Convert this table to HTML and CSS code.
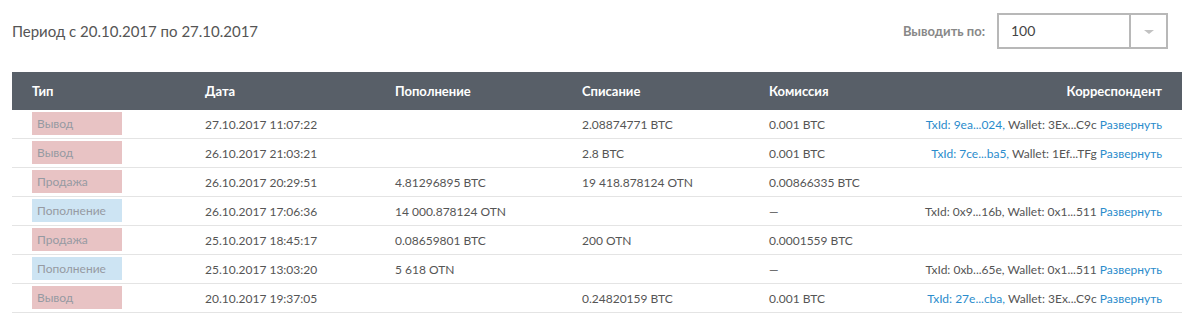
FILE: index.html
```html
<!DOCTYPE html>
<html lang="ru">
<head>
<meta charset="utf-8">
<link rel="stylesheet" href="styles.css">
</head>
<body>
<div class="page">
  <div class="top">
    <div class="period">Период с 20.10.2017 по 27.10.2017</div>
    <div class="per-page">
      <span class="per-label">Выводить по:</span>
      <div class="select">
        <span class="select-value">100</span>
        <span class="select-btn"><span class="arrow"></span></span>
      </div>
    </div>
  </div>
  <div class="table">
    <div class="row head">
      <div class="c c1">Тип</div>
      <div class="c c2">Дата</div>
      <div class="c c3">Пополнение</div>
      <div class="c c4">Списание</div>
      <div class="c c5">Комиссия</div>
      <div class="c c6">Корреспондент</div>
    </div>
    <div class="row">
      <div class="c c1"><span class="badge red">Вывод</span></div>
      <div class="c c2">27.10.2017 11:07:22</div>
      <div class="c c3"></div>
      <div class="c c4">2.08874771 BTC</div>
      <div class="c c5">0.001 BTC</div>
      <div class="c c6"><span class="link">TxId: 9ea...024,</span> Wallet: 3Ex...C9c <span class="link">Развернуть</span></div>
    </div>
    <div class="row">
      <div class="c c1"><span class="badge red">Вывод</span></div>
      <div class="c c2">26.10.2017 21:03:21</div>
      <div class="c c3"></div>
      <div class="c c4">2.8 BTC</div>
      <div class="c c5">0.001 BTC</div>
      <div class="c c6"><span class="link">TxId: 7ce...ba5,</span> Wallet: 1Ef...TFg <span class="link">Развернуть</span></div>
    </div>
    <div class="row">
      <div class="c c1"><span class="badge red">Продажа</span></div>
      <div class="c c2">26.10.2017 20:29:51</div>
      <div class="c c3">4.81296895 BTC</div>
      <div class="c c4">19 418.878124 OTN</div>
      <div class="c c5">0.00866335 BTC</div>
      <div class="c c6"></div>
    </div>
    <div class="row">
      <div class="c c1"><span class="badge blue">Пополнение</span></div>
      <div class="c c2">26.10.2017 17:06:36</div>
      <div class="c c3">14 000.878124 OTN</div>
      <div class="c c4"></div>
      <div class="c c5">—</div>
      <div class="c c6">TxId: 0x9...16b, Wallet: 0x1...511 <span class="link">Развернуть</span></div>
    </div>
    <div class="row">
      <div class="c c1"><span class="badge red">Продажа</span></div>
      <div class="c c2">25.10.2017 18:45:17</div>
      <div class="c c3">0.08659801 BTC</div>
      <div class="c c4">200 OTN</div>
      <div class="c c5">0.0001559 BTC</div>
      <div class="c c6"></div>
    </div>
    <div class="row">
      <div class="c c1"><span class="badge blue">Пополнение</span></div>
      <div class="c c2">25.10.2017 13:03:20</div>
      <div class="c c3">5 618 OTN</div>
      <div class="c c4"></div>
      <div class="c c5">—</div>
      <div class="c c6">TxId: 0xb...65e, Wallet: 0x1...511 <span class="link">Развернуть</span></div>
    </div>
    <div class="row">
      <div class="c c1"><span class="badge red">Вывод</span></div>
      <div class="c c2">20.10.2017 19:37:05</div>
      <div class="c c3"></div>
      <div class="c c4">0.24820159 BTC</div>
      <div class="c c5">0.001 BTC</div>
      <div class="c c6"><span class="link">TxId: 27e...cba,</span> Wallet: 3Ex...C9c <span class="link">Развернуть</span></div>
    </div>
  </div>
</div>
</body>
</html>
```

FILE: styles.css
```css
* { box-sizing: border-box; }
html, body { margin: 0; padding: 0; background: #fff; }
body {
  font-family: Lato, "Open Sans", sans-serif;
  color: #555;
  font-size: 12px;
}
.page {
  padding: 13px 14px 0 12px;
  width: 1196px;
}
.top {
  display: flex;
  justify-content: space-between;
  align-items: center;
  height: 36px;
  margin-bottom: 23px;
}
.period {
  font-size: 15px;
  color: #555;
}
.per-page {
  display: flex;
  align-items: center;
  gap: 12px;
  margin-right: 14px;
}
.per-label {
  font-weight: bold;
  color: #888;
  font-size: 13px;
}
.select {
  display: flex;
  width: 171px;
  height: 36px;
  border: 2px solid #b8b8b8;
}
.select-value {
  flex: 1;
  padding-left: 12px;
  line-height: 32px;
  font-size: 14px;
  color: #444;
}
.select-btn {
  width: 37px;
  border-left: 2px solid #b8b8b8;
  display: flex;
  align-items: center;
  justify-content: center;
}
.arrow {
  width: 0;
  height: 0;
  border-left: 5px solid transparent;
  border-right: 5px solid transparent;
  border-top: 4px solid #c2c2c2;
  margin-top: 2px;
}
.table { width: 1170px; }
.row {
  display: grid;
  grid-template-columns: 173px 190px 187px 187px 150px 1fr;
  height: 29px;
  border-bottom: 1px solid #e4e4e4;
  align-items: center;
}
.row.head {
  height: 38px;
  background: #585f68;
  border-bottom: none;
  color: #fff;
  font-weight: bold;
  font-size: 13px;
}
.c {
  padding-left: 20px;
  white-space: nowrap;
}
.c6 {
  padding-left: 0;
  padding-right: 20px;
  text-align: right;
}
.row:not(.head) .c1 { align-self: start; padding-top: 2px; }
.badge {
  display: block;
  width: 90px;
  height: 23px;
  line-height: 23px;
  padding-left: 5px;
  color: #969aa2;
  font-size: 12px;
}
.badge.red { background: #e8c3c4; }
.badge.blue { background: #cde4f3; }
.link { color: #2b8ccc; }
```
